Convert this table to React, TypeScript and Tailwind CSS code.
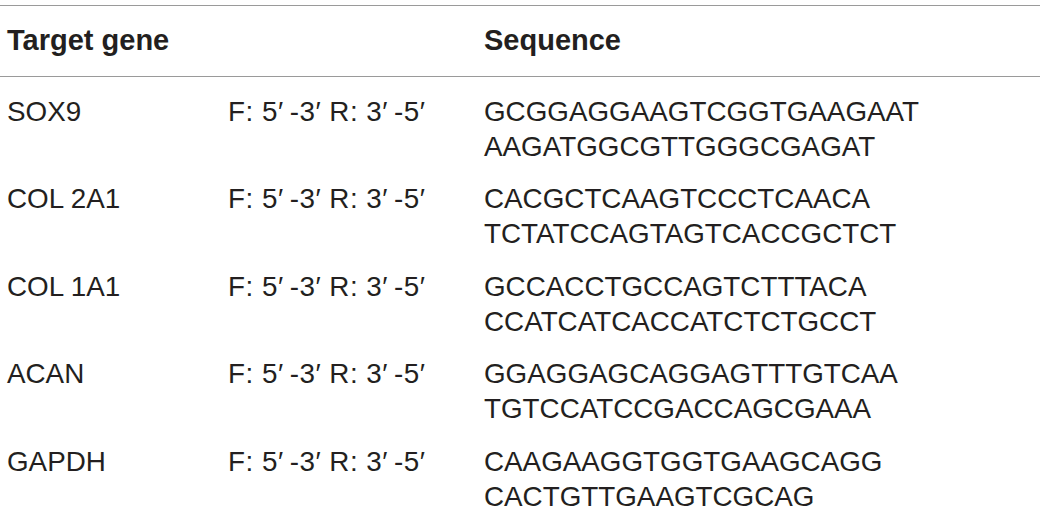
const rows = [
  { gene: "SOX9", seq: ["GCGGAGGAAGTCGGTGAAGAAT", "AAGATGGCGTTGGGCGAGAT"] },
  { gene: "COL 2A1", seq: ["CACGCTCAAGTCCCTCAACA", "TCTATCCAGTAGTCACCGCTCT"] },
  { gene: "COL 1A1", seq: ["GCCACCTGCCAGTCTTTACA", "CCATCATCACCATCTCTGCCT"] },
  { gene: "ACAN", seq: ["GGAGGAGCAGGAGTTTGTCAA", "TGTCCATCCGACCAGCGAAA"] },
  { gene: "GAPDH", seq: ["CAAGAAGGTGGTGAAGCAGG", "CACTGTTGAAGTCGCAG"] },
];

export default function App() {
  return (
    <div
      className="w-[1040px] h-[515px] bg-white overflow-hidden text-[#231f20]"
      style={{ fontFamily: '"Liberation Sans", Arial, sans-serif' }}
    >
      <div className="mt-[5px] border-t-[1.5px] border-[#9a9a9a]">
        <div className="flex items-center h-[70px] px-[7px] text-[29px] font-bold">
          <div className="w-[477px]">Target gene</div>
          <div>Sequence</div>
        </div>
        <div className="border-t-[1.5px] border-[#9a9a9a]">
          {rows.map((r) => (
            <div key={r.gene} className="flex px-[7px] pt-[17px] h-[87.4px] text-[27.8px] leading-[35px]">
              <div className="w-[221px]">{r.gene}</div>
              <div className="w-[256px] tracking-[0.5px]">F: 5′&#8201;-3′ R: 3′&#8201;-5′</div>
              <div>
                {r.seq.map((s) => (
                  <div key={s}>{s}</div>
                ))}
              </div>
            </div>
          ))}
        </div>
      </div>
    </div>
  );
}
